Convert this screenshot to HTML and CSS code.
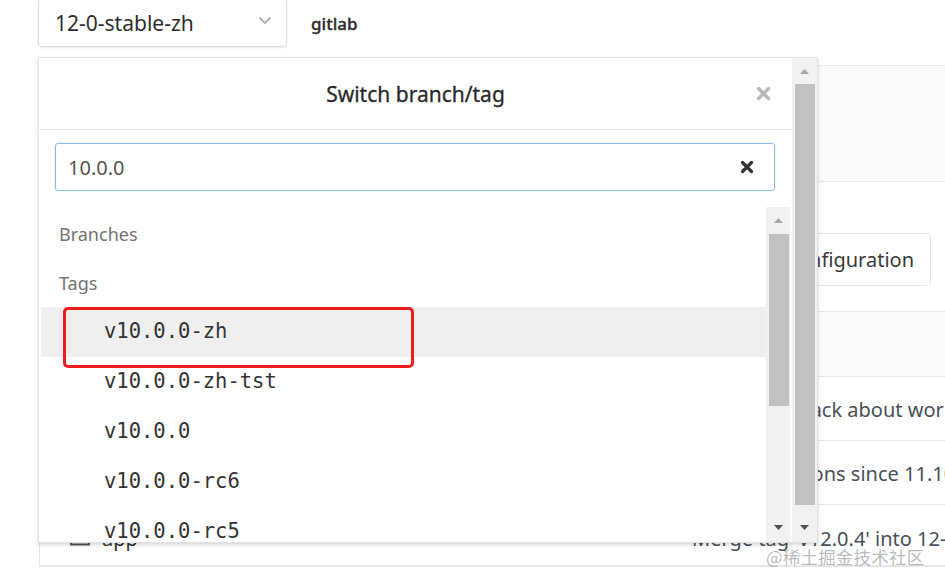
FILE: index.html
```html
<!DOCTYPE html>
<html lang="en">
<head>
<meta charset="utf-8">
<title>Switch branch/tag</title>
<link rel="stylesheet" href="styles.css">
</head>
<body>
<div class="page">
  <div class="topbar">
    <div class="select">
      <span class="select-text">12-0-stable-zh</span>
      <svg class="chevron" width="14" height="9" viewBox="0 0 14 9"><path d="M1.5 1.5 L7 7 L12.5 1.5" fill="none" stroke="#b3b3b3" stroke-width="2"/></svg>
    </div>
    <span class="project">gitlab</span>
  </div>

  <div class="content">
    <div class="info-bar"></div>
    <div class="actions">
      <button class="btn">Add CI/CD configuration</button>
    </div>
    <div class="tree">
      <div class="tree-head"></div>
      <div class="tree-row">
        <span class="name"></span>
        <span class="msg">Adjust feedback about workflow</span>
      </div>
      <div class="tree-row">
        <span class="name"></span>
        <span class="msg">Add translations since 11.10</span>
      </div>
      <div class="tree-row">
        <span class="name">
          <svg class="folder" width="20" height="16" viewBox="0 0 20 16"><path d="M1 3 L1 14.5 L19 14.5 L19 4 L9 4 L7 1.5 L1 1.5 Z" fill="none" stroke="#555" stroke-width="2"/></svg>
          <span>app</span>
        </span>
        <span class="msg">Merge tag 'v12.0.4' into 12-0-stable-zh</span>
      </div>
    </div>
  </div>

  <div class="dropdown">
    <div class="dd-main">
      <div class="dd-header">
        <span></span>
        <span class="dd-title">Switch branch/tag</span>
        <span class="dd-close">
          <svg width="15" height="15" viewBox="0 0 15 15"><path d="M2.5 2.5 L12.5 12.5 M12.5 2.5 L2.5 12.5" stroke="#b9b9b9" stroke-width="3.4" stroke-linecap="round"/></svg>
        </span>
      </div>
      <div class="dd-search">
        <div class="search-input">
          <span class="search-text">10.0.0</span>
          <svg class="search-clear" width="14" height="14" viewBox="0 0 14 14"><path d="M2.5 2.5 L11.5 11.5 M11.5 2.5 L2.5 11.5" stroke="#333" stroke-width="3.2" stroke-linecap="round"/></svg>
        </div>
      </div>
      <div class="dd-body">
        <div class="dd-list">
          <div class="dd-group">Branches</div>
          <div class="dd-group">Tags</div>
          <div class="dd-item is-active">v10.0.0-zh</div>
          <div class="dd-item">v10.0.0-zh-tst</div>
          <div class="dd-item">v10.0.0</div>
          <div class="dd-item">v10.0.0-rc6</div>
          <div class="dd-item">v10.0.0-rc5</div>
          <div class="dd-item">v10.0.0-rc4</div>
          <div class="mark"></div>
        </div>
        <div class="scrollbar inner">
          <div class="sb-btn up"><svg width="9" height="5" viewBox="0 0 9 5"><path d="M0 5 L4.5 0 L9 5 Z" fill="#a6a6a6"/></svg></div>
          <div class="sb-thumb inner-thumb"></div>
          <div class="sb-space"></div>
          <div class="sb-btn down"><svg width="9" height="5" viewBox="0 0 9 5"><path d="M0 0 L4.5 5 L9 0 Z" fill="#505050"/></svg></div>
        </div>
      </div>
    </div>
    <div class="scrollbar outer">
      <div class="sb-btn up"><svg width="9" height="5" viewBox="0 0 9 5"><path d="M0 5 L4.5 0 L9 5 Z" fill="#a6a6a6"/></svg></div>
      <div class="sb-thumb outer-thumb"></div>
      <div class="sb-space"></div>
      <div class="sb-btn down"><svg width="9" height="5" viewBox="0 0 9 5"><path d="M0 0 L4.5 5 L9 0 Z" fill="#505050"/></svg></div>
    </div>
  </div>

  <div class="watermark">@稀土掘金技术社区</div>
</div>
</body>
</html>
```

FILE: styles.css
```css
* { box-sizing: border-box; }

html, body {
  margin: 0;
  padding: 0;
  background: #fff;
  font-family: "Noto Sans", "Liberation Sans", sans-serif;
  color: #333;
  overflow: hidden;
}

.page {
  position: relative;
  width: 945px;
  height: 586px;
  overflow: hidden;
}

/* ---------- top bar ---------- */
.topbar {
  display: flex;
  align-items: center;
  height: 47px;
}

.select {
  display: flex;
  align-items: center;
  justify-content: space-between;
  width: 249px;
  height: 49px;
  margin-left: 38px;
  margin-top: -2px;
  padding: 0 14px 0 16px;
  border: 1px solid #dcdcdc;
  border-radius: 4px;
  box-shadow: 0 1px 2px rgba(0, 0, 0, 0.08);
}

.select-text {
  font-size: 21px;
  color: #2e2e2e;
}

.chevron { margin-top: -4px; }

.project {
  margin-left: 24px;
  font-size: 17px;
  font-weight: 500;
  color: #2e2e2e;
  -webkit-text-stroke: 0.35px #2e2e2e;
}

/* ---------- background content ---------- */
.content {
  margin-top: 18px;
  margin-left: 39px;
  border-left: 1px solid #e5e5e5;
}

.info-bar {
  height: 117px;
  background: #fafafa;
  border-top: 1px solid #e8e8e8;
  border-bottom: 1px solid #e8e8e8;
}

.actions {
  display: flex;
  justify-content: flex-end;
  height: 129px;
  padding: 51px 14px 0 0;
}

.btn {
  height: 53px;
  padding: 0 16px 0 16px;
  border: 1px solid #e3e3e3;
  border-radius: 5px;
  background: #fff;
  font-family: "Noto Sans", sans-serif;
  font-size: 20px;
  color: #3a3a3a;
}

.tree-head {
  height: 66px;
  background: #fafafa;
  border-top: 1px solid #e8e8e8;
  border-bottom: 1px solid #e8e8e8;
}

.tree-row {
  display: grid;
  grid-template-columns: 652px 1fr;
  align-items: center;
  height: 64px;
  padding-top: 2px;
  border-bottom: 1px solid #e8e8e8;
}

.tree-row:last-child { height: 62px; padding-top: 6px; border-bottom-width: 2px; }

.name {
  display: flex;
  align-items: center;
  gap: 12px;
  padding-left: 30px;
  font-size: 20px;
  color: #333;
}

.msg {
  white-space: nowrap;
  overflow: hidden;
  font-size: 20px;
  color: #4a4f57;
}

/* ---------- dropdown ---------- */
.dropdown {
  position: absolute;
  left: 38px;
  top: 57px;
  width: 780px;
  height: 486px;
  display: flex;
  background: #fff;
  border: 1px solid #e2e2e2;
  box-shadow: 0 2px 4px rgba(0, 0, 0, 0.16);
}

.dd-main {
  flex: 1;
  display: flex;
  flex-direction: column;
  min-width: 0;
}

.dd-header {
  display: grid;
  grid-template-columns: 1fr auto 1fr;
  align-items: center;
  height: 72px;
  border-bottom: 1px solid #e5e5e5;
}

.dd-title {
  font-size: 21px;
  color: #2a2a2a;
  -webkit-text-stroke: 0.3px #2a2a2a;
}

.dd-close {
  justify-self: end;
  display: flex;
  padding-right: 21px;
}

.dd-search {
  padding: 13px 17px 16px 16px;
}

.search-input {
  display: flex;
  align-items: center;
  justify-content: space-between;
  height: 48px;
  padding: 0 20px 0 12px;
  border: 1px solid #8fbbe6;
  border-radius: 3px;
  box-shadow: 0 0 2px rgba(90, 150, 220, 0.3);
}

.search-text {
  font-size: 20px;
  color: #555;
}

.dd-body {
  flex: 1;
  display: flex;
  min-height: 0;
  padding-right: 2px;
}

.dd-list {
  position: relative;
  flex: 1;
  overflow: hidden;
  padding: 2px 0 0 2px;
}

.dd-group {
  height: 49px;
  line-height: 50px;
  padding-left: 18px;
  font-size: 18px;
  color: #737373;
}

.dd-item {
  height: 50px;
  line-height: 48px;
  padding-left: 63px;
  font-family: "DejaVu Sans Mono", "Liberation Mono", monospace;
  font-size: 20.5px;
  color: #333;
  white-space: nowrap;
}

.dd-item.is-active { background: #efefef; }

.mark {
  position: absolute;
  left: 24px;
  top: 100px;
  width: 351px;
  height: 61px;
  border: 3px solid #f21b1b;
  border-radius: 5px;
}

/* scrollbars */
.scrollbar {
  display: flex;
  flex-direction: column;
  width: 24px;
  background: #f1f1f1;
}

.scrollbar.outer { width: 25px; }

.sb-btn {
  display: flex;
  align-items: center;
  justify-content: center;
}

.sb-btn.up { height: 27px; }
.sb-btn.down { height: 30px; }

.sb-thumb { background: #c1c1c1; }

.inner-thumb { height: 172px; margin: 0 1px 0 3px; }
.outer-thumb { height: 421px; margin: 0 2px 0 3px; }

.scrollbar.outer .sb-btn.up { height: 26px; }

.sb-space { flex: 1; }

/* watermark */
.watermark {
  position: absolute;
  left: 766px;
  top: 544px;
  font-family: "Noto Sans CJK SC", sans-serif;
  font-size: 17.5px;
  color: rgba(140, 140, 140, 0.6);
  letter-spacing: 0.2px;
}
```
